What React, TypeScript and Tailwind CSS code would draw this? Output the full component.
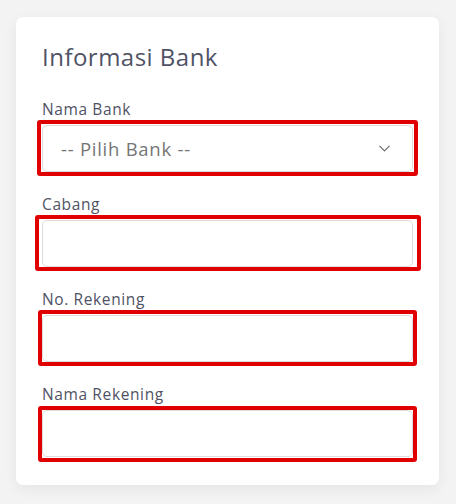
import {ChevronDown} from 'lucide-react';

const fields: {label: string; select?: boolean; box: string}[] = [
    {label: 'Nama Bank', select: true, box: '-top-[5px] -bottom-[4px] -left-[5px] -right-[5px]'},
    {label: 'Cabang', box: '-top-[5px] -bottom-[4px] -left-[7px] -right-[8px]'},
    {label: 'No. Rekening', box: '-top-[5px] -bottom-[4px] -left-[4px] -right-[4px]'},
    {label: 'Nama Rekening', box: '-top-[4px] -bottom-[5px] -left-[4px] -right-[4px]'},
];

const Field = ({label, select, box}: {label: string; select?: boolean; box: string}) => (
    <div className="flex flex-col">
        <label className="text-[15.5px] leading-[20px] tracking-[0.04em] text-[#4f5264]">{label}</label>
        <div className="relative mt-[6px]">
            {select ? (
                <div className="h-[47px] rounded-[5px] border border-[#dcdcdc] bg-white flex items-center justify-between pl-[18px] pr-[18px]">
                    <span className="text-[18.5px] tracking-[0.04em] text-[#757575]">-- Pilih Bank --</span>
                    <ChevronDown size={19} strokeWidth={1.5} className="text-[#6b6b6b]" />
                </div>
            ) : (
                <input
                    type="text"
                    className="w-full h-[47px] rounded-[5px] border border-[#dcdcdc] bg-white outline-none px-4"
                />
            )}
            <div className={'absolute pointer-events-none border-[4px] border-[#e00000] rounded-[3px] ' + box} />
        </div>
    </div>
);

export default function App() {
    return (
        <div className="min-h-[504px] w-[456px] bg-[#f3f3f3] pt-[17px] pl-[16px] pr-[17px] font-['Open_Sans',sans-serif]">
            <div className="bg-white rounded-[7px] shadow-[0_4px_14px_rgba(0,0,0,0.06)] px-[26px] pt-[24px] pb-[28px]">
                <h2 className="text-[24px] leading-[32px] tracking-[0.02em] text-[#505366] mb-[26px]">Informasi Bank</h2>
                <div className="flex flex-col gap-[22px]">
                    {fields.map((f) => (
                        <Field key={f.label} {...f} />
                    ))}
                </div>
            </div>
        </div>
    );
}
